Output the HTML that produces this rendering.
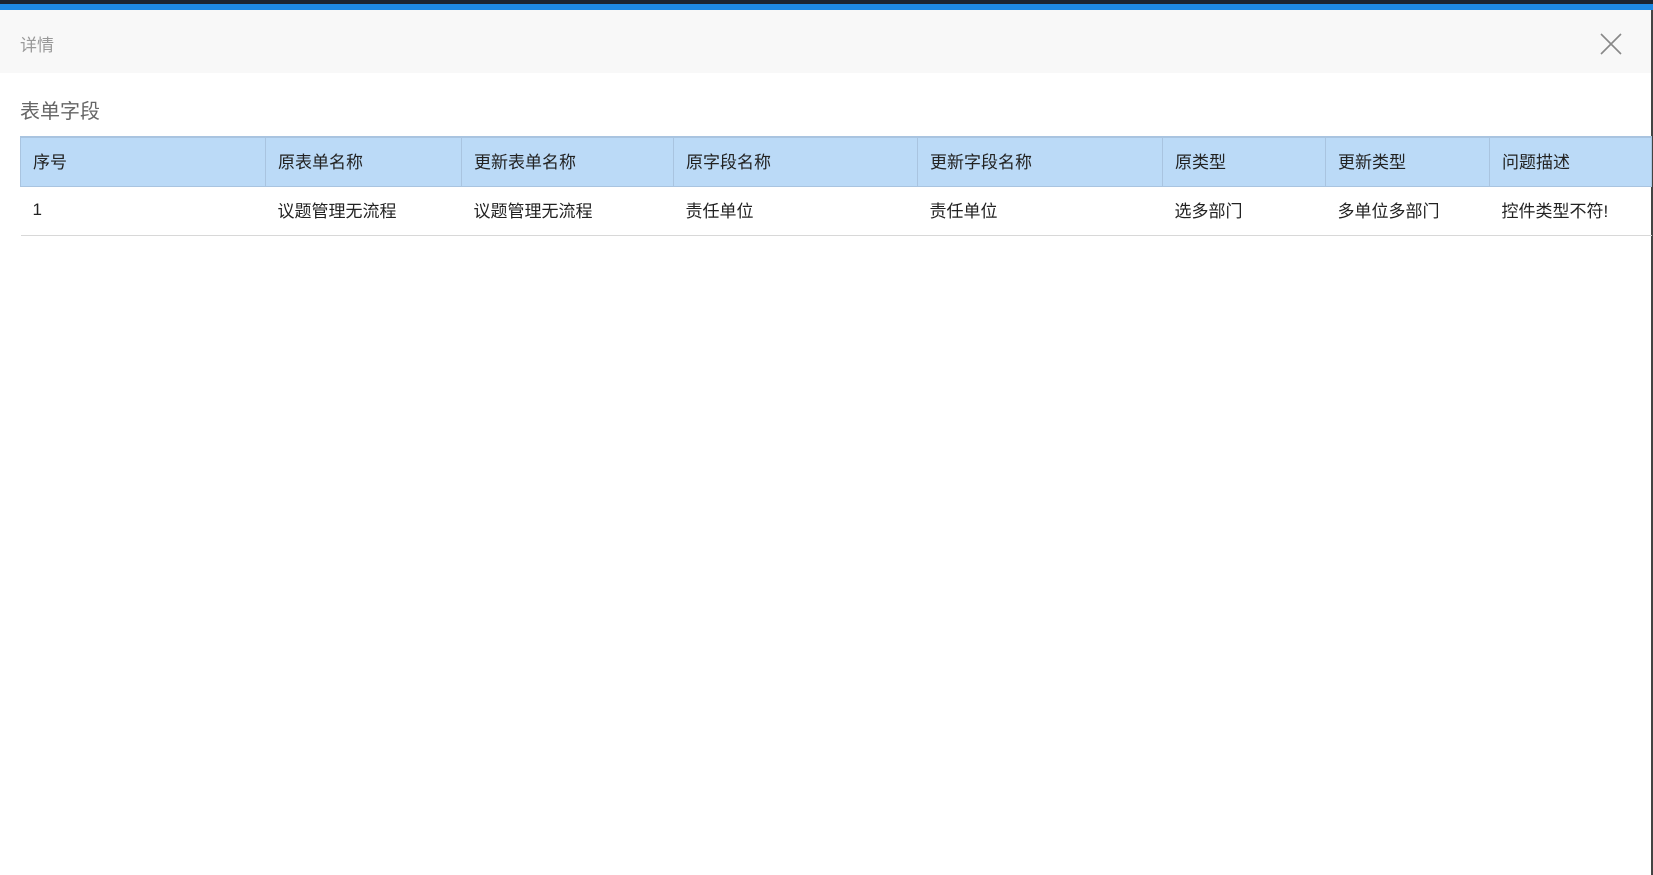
<!DOCTYPE html>
<html><head><meta charset="utf-8"><style>
body{margin:0;width:1653px;height:875px;overflow:hidden;background:#fff;font-family:"Liberation Sans","Noto Sans CJK SC",sans-serif;position:relative}
.top{position:absolute;left:0;top:0;width:1653px;height:4px;background:#1c2433}
.blue{position:absolute;left:0;top:4px;width:1653px;height:6px;background:#1e88e5}
.hdr{position:absolute;left:0;top:10px;width:1651px;height:63px;background:#f8f8f8}
.title{position:absolute;left:20px;top:31px;font-size:17px;color:#999}
.close{position:absolute;left:1600px;top:33px}
.edge{position:absolute;left:1651px;top:10px;width:2px;height:865px;background:#444}
.sec{position:absolute;left:20px;top:95px;font-size:20px;color:#666}
table{position:absolute;left:20px;top:136px;border-collapse:collapse;font-size:17px;color:#222;table-layout:fixed}
th{background:#bbdaf7;font-weight:normal;text-align:left;height:45px;padding:0 0 3px 12px;border:1px solid #a9c4e0;border-top:2px solid #a9c4e0}
td{height:45px;padding:0 0 3px 12px;border-bottom:1px solid #d8d8d8}
</style></head><body>
<div class="top"></div><div class="blue"></div>
<div class="hdr"></div>
<div class="title">详情</div>
<svg class="close" width="22" height="22" viewBox="0 0 22 22"><path d="M1 1L21 21M21 1L1 21" stroke="#888" stroke-width="1.6"/></svg>
<div class="edge"></div>
<div class="sec">表单字段</div>
<table>
<colgroup><col style="width:245px"><col style="width:196px"><col style="width:212px"><col style="width:244px"><col style="width:245px"><col style="width:163px"><col style="width:164px"><col style="width:162px"></colgroup>
<tr><th>序号</th><th>原表单名称</th><th>更新表单名称</th><th>原字段名称</th><th>更新字段名称</th><th>原类型</th><th>更新类型</th><th>问题描述</th></tr>
<tr><td>1</td><td>议题管理无流程</td><td>议题管理无流程</td><td>责任单位</td><td>责任单位</td><td>选多部门</td><td>多单位多部门</td><td>控件类型不符!</td></tr>
</table>
</body></html>
